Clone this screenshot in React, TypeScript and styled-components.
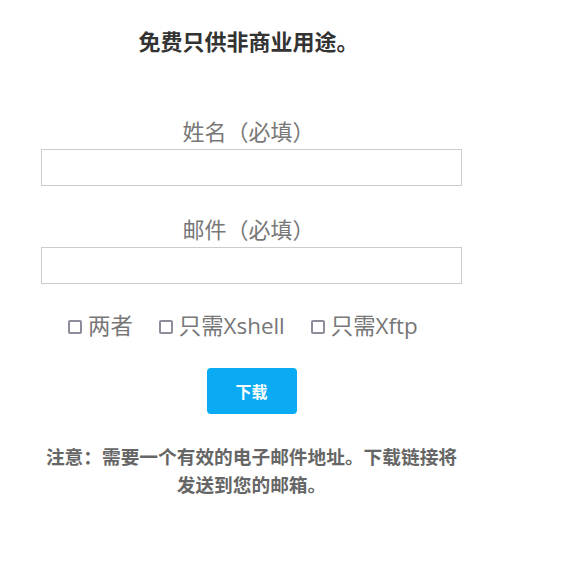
import * as React from "react";
import styled, { createGlobalStyle } from "styled-components";

const GlobalStyle = createGlobalStyle`
  body {
    margin: 0;
    background: #fff;
    font-family: "Noto Sans CJK SC", "Open Sans", sans-serif;
  }
`;

const Form = styled.form`
  width: 421px;
  margin-left: 41px;
  padding-top: 25px;
  display: flex;
  flex-direction: column;
  align-items: stretch;
  text-align: center;
`;

const Title = styled.h2`
  margin: 0 0 60px;
  padding-right: 6px;
  font-size: 22px;
  line-height: 30px;
  font-weight: 700;
  color: #333;
`;

const Label = styled.label`
  display: block;
  font-size: 22px;
  line-height: 30px;
  color: #777;
  margin-bottom: 4px;
  padding-right: 6px;
`;

const TextInput = styled.input<{ $gap: number }>`
  box-sizing: border-box;
  width: 100%;
  height: 37px;
  margin: 0 0 ${(p) => p.$gap}px;
  border: 1px solid #ccc;
  border-radius: 0;
  padding: 0 8px;
  font-size: 16px;
  outline: none;
`;

const Options = styled.div`
  display: flex;
  align-items: center;
  gap: 26px;
  padding-left: 27px;
  height: 30px;
  margin-bottom: 27px;
  margin-top: -2px;
`;

const Option = styled.label`
  display: flex;
  align-items: center;
  gap: 6px;
  font-family: "Open Sans", "Noto Sans CJK SC", sans-serif;
  font-size: 22.4px;
  line-height: 30px;
  color: #777;
  cursor: pointer;
`;

const Box = styled.input`
  appearance: none;
  margin: 2px 0 0;
  width: 14px;
  height: 14px;
  box-sizing: border-box;
  border: 2px solid #8e8c9a;
  border-radius: 2px;
  background: #fff;

  &:checked {
    background: #0aabf2;
    border-color: #0aabf2;
  }
`;

const Download = styled.button`
  align-self: center;
  width: 90px;
  height: 46px;
  margin: 0 0 28px;
  border: none;
  border-radius: 4px;
  background: #0aabf2;
  color: #fff;
  font-family: "Noto Sans CJK SC", sans-serif;
  font-size: 16px;
  font-weight: 700;
  cursor: pointer;
`;

const Note = styled.p`
  margin: 0;
  font-size: 18.7px;
  line-height: 28px;
  font-weight: 700;
  color: #666;
`;

export default function App() {
  const [choice, setChoice] = React.useState<string | null>(null);
  const options = ["两者", "只需Xshell", "只需Xftp"];

  return (
    <>
      <GlobalStyle />
      <Form onSubmit={(e) => e.preventDefault()}>
        <Title>免费只供非商业用途。</Title>
        <Label htmlFor="name">姓名（必填）</Label>
        <TextInput id="name" type="text" $gap={27} />
        <Label htmlFor="email">邮件（必填）</Label>
        <TextInput id="email" type="email" $gap={29} />
        <Options>
          {options.map((o) => (
            <Option key={o}>
              <Box
                type="checkbox"
                checked={choice === o}
                onChange={() => setChoice(choice === o ? null : o)}
              />
              {o}
            </Option>
          ))}
        </Options>
        <Download type="submit">下载</Download>
        <Note>注意：需要一个有效的电子邮件地址。下载链接将发送到您的邮箱。</Note>
      </Form>
    </>
  );
}
